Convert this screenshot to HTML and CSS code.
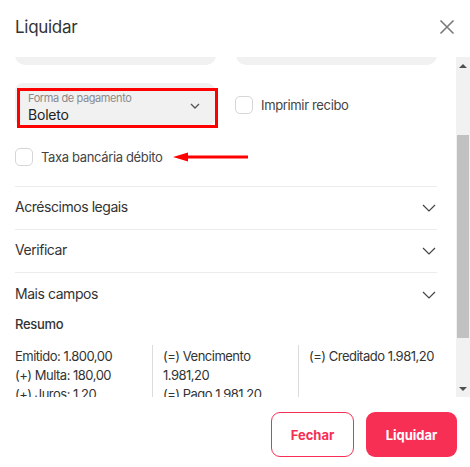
FILE: index.html
```html
<!DOCTYPE html>
<html lang="pt-BR">
<head>
<meta charset="utf-8">
<link rel="stylesheet" href="styles.css">
</head>
<body>
<div class="modal">
  <header class="modal-header">
    <h1 class="title">Liquidar</h1>
    <svg class="close" width="16" height="16" viewBox="0 0 16 16"><path d="M1.5 1.5 L14.5 14.5 M14.5 1.5 L1.5 14.5" stroke="#7a7a7a" stroke-width="1.6" fill="none"/></svg>
  </header>
  <div class="scroll-wrap">
    <div class="scroll-view">
      <div class="content">
        <div class="row-fields">
          <div class="field-stub"></div>
          <div class="field-stub"></div>
        </div>
        <div class="row-select">
          <div class="select">
            <div class="select-text">
              <span class="select-label">Forma de pagamento</span>
              <span class="select-value">Boleto</span>
            </div>
            <svg class="select-chevron" width="10" height="6" viewBox="0 0 10 6"><path d="M1 1 L5 5 L9 1" stroke="#555" stroke-width="1.3" fill="none"/></svg>
            <div class="highlight"></div>
          </div>
          <label class="check"><span class="box"></span><span>Imprimir recibo</span></label>
        </div>
        <div class="row-taxa">
          <label class="check"><span class="box"></span><span>Taxa bancária débito</span></label>
          <svg class="arrow" width="76" height="10" viewBox="0 0 76 10"><path d="M14 5 H75" stroke="#f00" stroke-width="3"/><path d="M0 5 L15 0.5 L15 9.5 Z" fill="#f00"/></svg>
        </div>
        <div class="accordion">
          <div class="acc-item"><span>Acréscimos legais</span><svg width="14" height="8" viewBox="0 0 14 8"><path d="M1 1 L7 7 L13 1" stroke="#444" stroke-width="1.2" fill="none"/></svg></div>
          <div class="acc-item"><span>Verificar</span><svg width="14" height="8" viewBox="0 0 14 8"><path d="M1 1 L7 7 L13 1" stroke="#444" stroke-width="1.2" fill="none"/></svg></div>
          <div class="acc-item last"><span>Mais campos</span><svg width="14" height="8" viewBox="0 0 14 8"><path d="M1 1 L7 7 L13 1" stroke="#444" stroke-width="1.2" fill="none"/></svg></div>
        </div>
        <div class="resumo-title">Resumo</div>
        <div class="resumo">
          <div class="col">
            <div>Emitido: 1.800,00</div>
            <div>(+) Multa: 180,00</div>
            <div>(+) Juros: 1,20</div>
          </div>
          <div class="col sep">
            <div>(=) Vencimento 1.981,20</div>
            <div>(=) Pago 1.981,20</div>
          </div>
          <div class="col sep">
            <div class="nowrap">(=) Creditado 1.981,20</div>
          </div>
        </div>
      </div>
    </div>
    <div class="scrollbar">
      <div class="sb-btn"><span class="tri-up"></span></div>
      <div class="sb-track">
        <div class="sb-thumb"></div>
      </div>
      <div class="sb-btn"><span class="tri-down"></span></div>
    </div>
  </div>
  <footer class="modal-footer">
    <button class="btn btn-outline">Fechar</button>
    <button class="btn btn-primary">Liquidar</button>
  </footer>
</div>
</body>
</html>
```

FILE: styles.css
```css
* { box-sizing: border-box; }
html, body { margin: 0; padding: 0; background: #fff; }
body {
  font-family: Inter, "Noto Sans", "Liberation Sans", sans-serif;
  color: #333;
  width: 470px;
  height: 467px;
  overflow: hidden;
}
.modal { display: flex; flex-direction: column; height: 467px; }
.modal-header {
  height: 57px;
  display: flex;
  align-items: center;
  justify-content: space-between;
  padding: 0 15px 3px 15px;
}
.title { margin: 0; font-size: 17px; font-weight: 400; color: #333; letter-spacing: -0.3px; }

.scroll-wrap { display: flex; height: 340px; }
.scroll-view { flex: 1; overflow: hidden; }
.content { padding: 0 19px 0 15px; margin-top: -40px; }

.row-fields { display: flex; gap: 20px; }
.field-stub { flex: 1; height: 48px; background: #f1f1f1; border-radius: 10px; }

.row-select { display: flex; align-items: center; gap: 20px; margin-top: 18px; }
.select {
  position: relative;
  width: 200px;
  height: 43px;
  background: #f1f1f1;
  border-radius: 8px;
  display: flex;
  align-items: center;
  padding: 0 13px;
}
.select-text { flex: 1; display: flex; flex-direction: column; padding-top: 6px; }
.select-label { font-size: 11px; color: #8a8a8a; line-height: 13px; letter-spacing: -0.4px; }
.select-value { font-size: 14px; color: #222; line-height: 18px; margin-top: 1px; letter-spacing: -0.2px; }
.select-chevron { margin-top: 2px; margin-right: 2px; }
.highlight {
  position: absolute;
  left: 2px; top: 5px;
  width: 201px; height: 40px;
  border: 3px solid #f00;
}

.check { display: flex; align-items: center; gap: 8px; font-size: 13px; color: #444; letter-spacing: -0.35px; }
.box { width: 18px; height: 18px; border: 1px solid #d6d6d6; border-radius: 5px; background: #fff; }

.row-taxa { display: flex; align-items: center; margin-top: 22px; height: 18px; }
.arrow { margin-left: 11px; }

.accordion { margin-top: 20px; border-top: 1px solid #ececec; }
.acc-item {
  height: 43px;
  display: flex;
  align-items: center;
  justify-content: space-between;
  border-bottom: 1px solid #ececec;
  font-size: 14px;
  color: #333;
  letter-spacing: -0.45px;
  padding: 0 1px 3px 0;
}
.acc-item svg { margin-top: 3px; }
.acc-item.last { border-bottom: none; }

.resumo-title { font-size: 13px; font-weight: 500; color: #333; margin-top: -1px; line-height: 18px; letter-spacing: -0.3px; }
.resumo {
  display: grid;
  grid-template-columns: 137px 146px 1fr;
  margin-top: 12px;
  font-size: 13px;
  line-height: 19px;
  color: #333;
  letter-spacing: -0.5px;
}
.col { padding-top: 2px; }
.col.sep { border-left: 1px solid #dcdcdc; padding-left: 10px; }
.nowrap { white-space: nowrap; }

.scrollbar { width: 14px; background: #f1f1f1; display: flex; flex-direction: column; }
.sb-btn { height: 17px; display: flex; align-items: center; justify-content: center; }
.tri-up { width: 0; height: 0; border-left: 4px solid transparent; border-right: 4px solid transparent; border-bottom: 4px solid #505050; }
.tri-down { width: 0; height: 0; border-left: 4px solid transparent; border-right: 4px solid transparent; border-top: 4px solid #505050; }
.sb-track { flex: 1; padding-top: 61px; }
.sb-thumb { height: 203px; background: #c1c1c1; margin: 0 1px; }

.modal-footer {
  flex: 1;
  display: flex;
  justify-content: flex-end;
  align-items: flex-start;
  gap: 12px;
  padding: 15px 13px 0 0;
}
.btn {
  font-family: Inter, "Noto Sans", sans-serif;
  font-size: 13px;
  font-weight: 700;
  height: 45px;
  border-radius: 9px;
  cursor: pointer;
}
.btn-outline { width: 83px; background: #fff; color: #f72f55; border: 1px solid #f72f55; }
.btn-primary { width: 91px; background: #f72f55; color: #fff; border: none; }
```
